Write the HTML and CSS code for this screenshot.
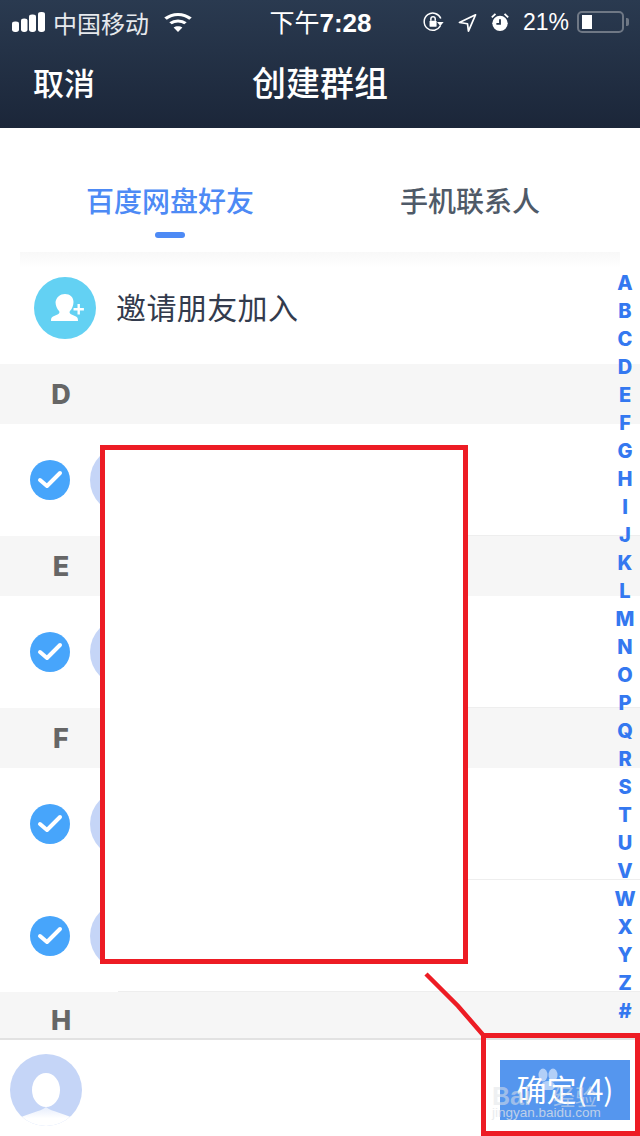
FILE: index.html
```html
<!DOCTYPE html>
<html lang="zh-CN">
<head>
  <meta charset="UTF-8" />
  <meta name="viewport" content="width=device-width, initial-scale=1.0"/>
  <title>创建群组</title>
  <link rel="stylesheet" href="styles.css">
</head>
<body>
  <div class="page">
    <header class="header">
      <div class="status-bar">
        <div class="status-left">
          <svg class="signal" width="33" height="20" viewBox="0 0 33 25" preserveAspectRatio="none">
            <rect x="0" y="12" width="7" height="13" rx="3"/>
            <rect x="9" y="8" width="6.500" height="17" rx="3"/>
            <rect x="17" y="3" width="7" height="22" rx="3"/>
            <rect x="26" y="0" width="7" height="25" rx="3"/>
          </svg>
          <span class="carrier">中国移动</span>
          <svg class="wifi" width="28" height="20" viewBox="0 0 28 24" preserveAspectRatio="none" fill="none" stroke="#fff" stroke-width="3.600">
            <path d="M1.500 8C8.500 1.200 19.500 1.200 26.500 8"/>
            <path d="M6.500 13.500C10.700 9.700 17.300 9.700 21.500 13.500"/>
            <path d="M14 24l-4.400-5.500c2.400-2 6.400-2 8.800 0z" fill="#fff" stroke="none"/>
          </svg>
        </div>
        <div class="status-time">下午<b>7:28</b></div>
        <div class="status-right">
          <svg width="23" height="22" viewBox="0 0 24 25" fill="none" stroke="#fff" stroke-width="1.700">
            <path d="M20 16.500a9.800 9.800 0 1 1 .3-8"/>
            <path d="M23.500 12.500h-7.500l3.800 4.500z" fill="#fff" stroke="none"/>
            <rect x="7.500" y="11" width="8" height="7" rx="1" fill="#fff" stroke="none"/>
            <path d="M9 11V9a2.500 2.500 0 0 1 5 0v2"/>
          </svg>
          <svg class="loc" width="19" height="19" viewBox="0 0 20 22" preserveAspectRatio="none" fill="none" stroke="#fff" stroke-width="1.800" stroke-linejoin="round">
            <path d="M18.500 2L1.500 11l8.500 1.500 1 8.500z"/>
          </svg>
          <svg class="alarm" width="20" height="20" viewBox="0 0 20 22">
            <circle cx="10" cy="12.500" r="8.500" fill="#fff"/>
            <path d="M10 8v5H6" fill="none" stroke="#26354a" stroke-width="2"/>
            <path d="M1 6l4-4M19 6l-4-4" stroke="#fff" stroke-width="2"/>
          </svg>
          <span class="percent">21%</span>
          <div class="battery"><div class="battery-fill"></div></div>
          <div class="battery-cap"></div>
        </div>
      </div>
      <nav class="nav-bar">
        <span class="nav-cancel">取消</span>
        <span class="nav-title">创建群组</span>
        <span></span>
      </nav>
    </header>

    <div class="tabs">
      <div class="tab tab-active">百度网盘好友<i class="tab-line"></i></div>
      <div class="tab">手机联系人</div>
    </div>
    <div class="tabs-shadow"></div>

    <main class="list">
      <div class="invite-row">
        <div class="invite-icon">
          <svg width="38" height="28" viewBox="0 0 38 28" fill="#fff">
            <path d="M16 0c5 0 8.500 3 8.500 8 0 3.500-1.500 7-3.500 9-.8 1-.5 2.500 1 3.200l5 2.300c1.500.7 2 2 2 4.500H2c0-2.500.5-3.800 2-4.500l5-2.300c1.500-.7 1.800-2.200 1-3.200-2-2-3.500-5.500-3.500-9C7.500 3 11 0 16 0z"/>
            <path d="M28.500 10h2.400v4h4v2.400h-4v4h-2.400v-4h-4V14h4z" stroke="#63d1f3" stroke-width="1.200" paint-order="stroke"/>
          </svg>
        </div>
        <span class="invite-text">邀请朋友加入</span>
      </div>

      <div class="section-head"><span class="section-letter">D</span></div>
      <div class="contact-row">
        <div class="check"><svg width="26" height="20" viewBox="0 0 26 20" fill="none" stroke="#fff" stroke-width="4" stroke-linecap="round" stroke-linejoin="round"><path d="M3 10l7 6L23 3"/></svg></div>
        <div class="avatar"></div>
      </div>

      <div class="section-head"><span class="section-letter">E</span></div>
      <div class="contact-row">
        <div class="check"><svg width="26" height="20" viewBox="0 0 26 20" fill="none" stroke="#fff" stroke-width="4" stroke-linecap="round" stroke-linejoin="round"><path d="M3 10l7 6L23 3"/></svg></div>
        <div class="avatar"></div>
      </div>

      <div class="section-head"><span class="section-letter">F</span></div>
      <div class="contact-row">
        <div class="check"><svg width="26" height="20" viewBox="0 0 26 20" fill="none" stroke="#fff" stroke-width="4" stroke-linecap="round" stroke-linejoin="round"><path d="M3 10l7 6L23 3"/></svg></div>
        <div class="avatar"></div>
      </div>
      <div class="contact-row">
        <div class="check"><svg width="26" height="20" viewBox="0 0 26 20" fill="none" stroke="#fff" stroke-width="4" stroke-linecap="round" stroke-linejoin="round"><path d="M3 10l7 6L23 3"/></svg></div>
        <div class="avatar"></div>
      </div>

      <div class="section-head section-head-last"><span class="section-letter">H</span></div>
    </main>

    <footer class="bottom-bar">
      <div class="avatar-picked">
        <svg width="72" height="72" viewBox="0 0 72 72">
          <defs>
            <linearGradient id="shoulder" x1="0" y1="0" x2="0" y2="1">
              <stop offset="0" stop-color="#e6edfc"/>
              <stop offset="0.6" stop-color="#fff"/>
            </linearGradient>
          </defs>
          <path d="M0 72V64H10C18 59 30 58 36 53 42 58 54 59 62 64H72V72Z" fill="url(#shoulder)"/>
          <ellipse cx="36" cy="36" rx="14" ry="17" fill="#fff"/>
        </svg>
      </div>
      <div class="confirm-btn">确定(4)</div>
    </footer>

    <!-- alphabet index sits over the list -->
    <div class="alpha-index">
      <span>A</span><span>B</span><span>C</span><span>D</span><span>E</span><span>F</span><span>G</span>
      <span>H</span><span>I</span><span>J</span><span>K</span><span>L</span><span>M</span><span>N</span>
      <span>O</span><span>P</span><span>Q</span><span>R</span><span>S</span><span>T</span><span>U</span>
      <span>V</span><span>W</span><span>X</span><span>Y</span><span>Z</span><span>#</span>
    </div>

    <!-- red marks drawn on top of the screenshot -->
    <div class="mark-patch"></div>
    <div class="mark-cover"></div>
    <div class="mark-button"></div>
    <svg class="mark-line" width="80" height="80" viewBox="0 0 80 80" fill="none" stroke="#ed1c24" stroke-width="4.500">
      <path d="M6 4L38 36 64 66"/>
    </svg>

    <div class="watermark">
      <svg class="paw" width="20" height="22" viewBox="0 0 20 22" fill="#fff">
        <ellipse cx="5" cy="7" rx="4.500" ry="6.500"/>
        <ellipse cx="15" cy="7" rx="4.500" ry="6.500"/>
        <ellipse cx="10" cy="18" rx="7" ry="5"/>
      </svg>
      <div class="wm-logo">Bai<span class="wm-cn">经验</span></div>
      <div class="wm-url">jingyan.baidu.com</div>
    </div>
  </div>
</body>
</html>
```

FILE: styles.css
```css
* { box-sizing: border-box; }
body {
  margin: 0;
  background: #fff;
  font-family: "Liberation Sans", "Noto Sans CJK SC", sans-serif;
}
.page {
  position: relative;
  width: 640px;
  height: 1136px;
  overflow: hidden;
  display: flex;
  flex-direction: column;
}

/* header */
.header {
  height: 128px;
  flex: none;
  background: linear-gradient(#2a3a50, #1b2639);
  color: #fff;
}
.status-bar {
  height: 42px;
  padding: 0 11px 0 12px;
  display: grid;
  grid-template-columns: 1fr auto 1fr;
  align-items: center;
}
.status-left, .status-right {
  display: flex;
  align-items: center;
}
.status-right { justify-content: flex-end; }
.signal { fill: #fff; margin-right: 8px; }
.carrier {
  font-size: 24px;
  color: #e6e9ed;
  font-family: "Noto Sans CJK SC", sans-serif;
  margin-right: 15px;
}
.status-time {
  font-size: 25px;
  font-family: "Noto Sans CJK SC", sans-serif;
  line-height: 42px;
}
.status-time b {
  font-family: "Liberation Sans", sans-serif;
  font-size: 26px;
}
.loc { margin-left: 13px; }
.alarm { margin-left: 13px; }
.percent {
  font-size: 23px;
  margin-left: 13px;
  margin-right: 8px;
}
.battery {
  width: 47px;
  height: 22px;
  border: 2px solid #6f7885;
  border-radius: 5px;
  padding: 2px 3px;
}
.battery-fill {
  width: 10px;
  height: 100%;
  background: #fff;
}
.battery-cap {
  width: 3px;
  height: 8px;
  margin-left: 2px;
  background: #6f7885;
  border-radius: 0 2px 2px 0;
}
.nav-bar {
  height: 86px;
  padding: 0 33px 8px;
  display: grid;
  grid-template-columns: 1fr auto 1fr;
  align-items: center;
  font-family: "Noto Sans CJK SC", sans-serif;
  font-weight: 500;
}
.nav-cancel { font-size: 31px; }
.nav-title { font-size: 34px; }

/* tabs */
.tabs {
  height: 124px;
  flex: none;
  display: grid;
  grid-template-columns: 330px 270px;
  padding-left: 5px;
  font-family: "Noto Sans CJK SC", sans-serif;
  font-size: 28px;
  font-weight: 500;
  color: #4f5a68;
}
.tab {
  position: relative;
  text-align: center;
  line-height: 144px;
  height: 124px;
}
.tab-active { color: #4d8af5; }
.tab-line {
  position: absolute;
  left: 150px;
  top: 104px;
  width: 30px;
  height: 6px;
  border-radius: 3px;
  background: #4d8af5;
}
.tabs-shadow {
  position: absolute;
  top: 252px;
  left: 20px;
  right: 20px;
  height: 16px;
  background: linear-gradient(#f8f8f8, #fff);
}

/* list */
.list {
  position: relative;
  flex: 1;
  overflow: hidden;
}
.invite-row {
  height: 112px;
  padding-left: 34px;
  display: flex;
  align-items: center;
  gap: 20px;
}
.invite-icon {
  width: 62px;
  height: 62px;
  border-radius: 50%;
  background: #63d1f3;
  display: flex;
  align-items: center;
  justify-content: center;
}
.invite-icon svg { margin-left: 6px; }
.invite-text {
  font-family: "Noto Sans CJK SC", sans-serif;
  font-size: 30px;
  letter-spacing: 0.4px;
  color: #333b4d;
  padding-bottom: 5px;
}
.section-head {
  height: 60px;
  padding-top: 2px;
  background: #f6f6f6;
  display: flex;
  align-items: center;
}
.section-head-last {
  height: 46px;
  padding-top: 12px;
}
.section-letter {
  width: 122px;
  text-align: center;
  font-family: "Inter", "Liberation Sans", sans-serif;
  font-size: 27px;
  line-height: 32px;
  font-weight: 800;
  color: #666;
}
.contact-row {
  height: 112px;
  padding-left: 30px;
  display: flex;
  align-items: center;
  gap: 20px;
  background: linear-gradient(#eee, #eee) right bottom / 522px 1px no-repeat;
}
.check {
  width: 40px;
  height: 40px;
  border-radius: 50%;
  background: #47a5fb;
  display: flex;
  align-items: center;
  justify-content: center;
}
.avatar {
  width: 68px;
  height: 68px;
  border-radius: 50%;
  background: #c5d5f7;
  flex: none;
}
.avatar-picked {
  width: 72px;
  height: 72px;
  border-radius: 50%;
  background: #c5d5f7;
  overflow: hidden;
  flex: none;
}

/* bottom bar */
.bottom-bar {
  height: 98px;
  flex: none;
  background: #fff;
  border-top: 2px solid #e2e2e2;
  padding: 14px 10px 0;
  display: flex;
  justify-content: space-between;
}
.confirm-btn {
  width: 130px;
  height: 60px;
  margin-top: 6px;
  background: #5596ee;
  color: #fff;
  font-family: "Noto Sans CJK SC", sans-serif;
  font-size: 30px;
  line-height: 56px;
  text-align: center;
  white-space: nowrap;
}

/* alphabet index */
.alpha-index {
  position: absolute;
  top: 269px;
  right: 0;
  width: 30px;
  display: flex;
  flex-direction: column;
  align-items: center;
  font-family: "Inter", "Liberation Sans", sans-serif;
  font-size: 20px;
  font-weight: 800;
  line-height: 28px;
  color: #3478f0;
}

/* red marks */
.mark-patch {
  position: absolute;
  left: 100px;
  top: 960px;
  width: 368px;
  height: 31px;
  background: #fff;
}
.mark-cover {
  position: absolute;
  left: 100px;
  top: 445px;
  width: 368px;
  height: 519px;
  background: #fff;
  border: 5px solid #ed1c24;
}
.mark-button {
  position: absolute;
  left: 481px;
  top: 1033px;
  width: 159px;
  height: 103px;
  border: 5px solid #ed1c24;
}
.mark-line {
  position: absolute;
  left: 420px;
  top: 970px;
}

/* site watermark */
.watermark {
  position: absolute;
  left: 490px;
  top: 1068px;
  width: 130px;
  height: 60px;
  color: rgba(225, 228, 232, 0.75);
}
.paw {
  position: absolute;
  left: 48px;
  top: 0;
  opacity: 0.55;
}
.wm-logo {
  position: absolute;
  left: 2px;
  top: 11px;
  font-size: 25px;
  font-weight: bold;
  opacity: 0.7;
  white-space: nowrap;
}
.wm-cn {
  font-family: "Noto Sans CJK SC", sans-serif;
  font-size: 22px;
  margin-left: 22px;
  font-weight: normal;
}
.wm-url {
  position: absolute;
  left: 2px;
  top: 37px;
  font-size: 13.500px;
  white-space: nowrap;
}
```
